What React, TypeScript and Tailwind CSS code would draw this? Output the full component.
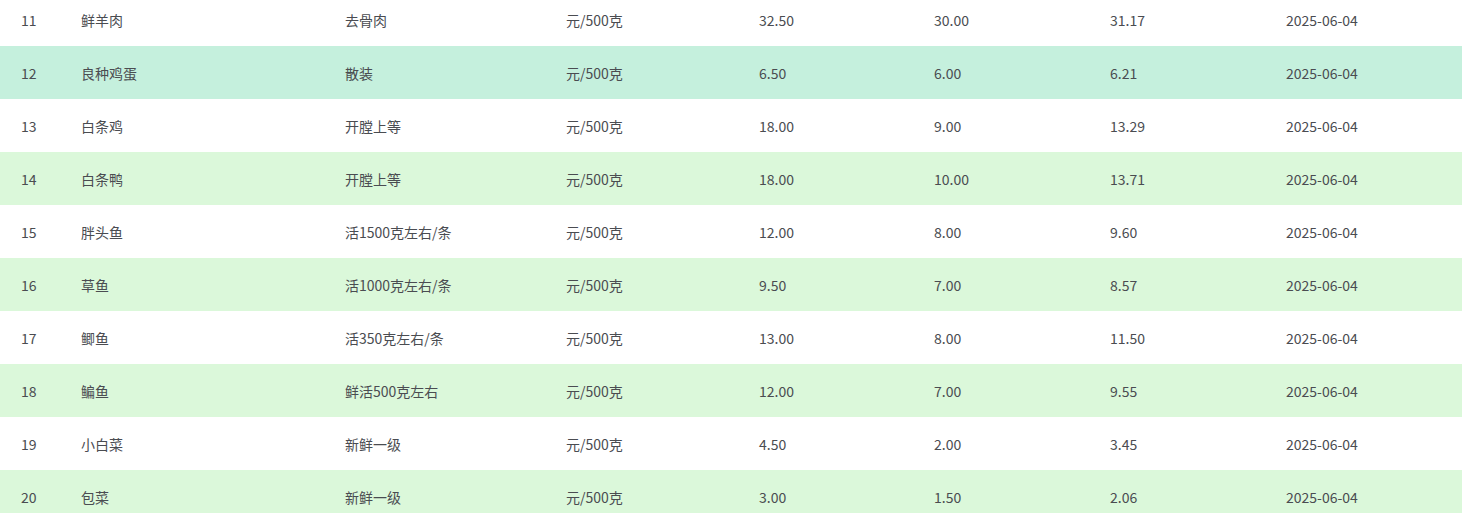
import React from "react";

const rows = [
  ["11", "鲜羊肉", "去骨肉", "元/500克", "32.50", "30.00", "31.17", "2025-06-04"],
  ["12", "良种鸡蛋", "散装", "元/500克", "6.50", "6.00", "6.21", "2025-06-04"],
  ["13", "白条鸡", "开膛上等", "元/500克", "18.00", "9.00", "13.29", "2025-06-04"],
  ["14", "白条鸭", "开膛上等", "元/500克", "18.00", "10.00", "13.71", "2025-06-04"],
  ["15", "胖头鱼", "活1500克左右/条", "元/500克", "12.00", "8.00", "9.60", "2025-06-04"],
  ["16", "草鱼", "活1000克左右/条", "元/500克", "9.50", "7.00", "8.57", "2025-06-04"],
  ["17", "鲫鱼", "活350克左右/条", "元/500克", "13.00", "8.00", "11.50", "2025-06-04"],
  ["18", "鳊鱼", "鲜活500克左右", "元/500克", "12.00", "7.00", "9.55", "2025-06-04"],
  ["19", "小白菜", "新鲜一级", "元/500克", "4.50", "2.00", "3.45", "2025-06-04"],
  ["20", "包菜", "新鲜一级", "元/500克", "3.00", "1.50", "2.06", "2025-06-04"],
];

const widths = ["w-[71px]", "w-[264px]", "w-[221px]", "w-[193px]", "w-[175px]", "w-[176px]", "w-[176px]", "w-[186px]"];

export default function App() {
  return (
    <div
      className="w-[1462px] h-[513px] overflow-hidden bg-white text-[14px] text-[#4a4c51]"
      style={{ fontFamily: '"Noto Sans CJK SC", "Noto Sans", sans-serif' }}
    >
      <div className="-mt-[7px] flex flex-col">
        {rows.map((r, i) => {
          const bg = i === 1 ? "bg-[#c5f0dd]" : i % 2 === 1 ? "bg-[#dbf8da]" : "bg-white";
          return (
            <div key={r[0]} className={`flex h-[53px] items-center pt-[2px] ${bg}`}>
              {r.map((c, j) => (
                <div key={j} className={`${widths[j]} shrink-0 ${j === 0 ? "pl-[21px]" : "pl-[10px]"} leading-[23px]`}>
                  {c}
                </div>
              ))}
            </div>
          );
        })}
      </div>
    </div>
  );
}
